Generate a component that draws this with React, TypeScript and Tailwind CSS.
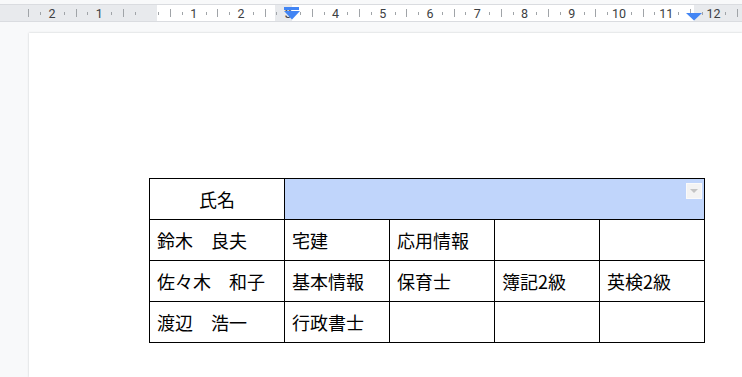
import React from "react";

function Ruler() {
  const origin = 146.5;
  const unit = 47.25;
  const items: React.ReactNode[] = [];
  for (let i = -10; i <= 52; i++) {
    const x = origin + (i * unit) / 4;
    if (x < -2 || x > 745) continue;
    const m = ((i % 4) + 4) % 4;
    if (m === 0) {
      if (i === 0) continue;
      items.push(
        <text
          key={"n" + i}
          x={x}
          y={17.5}
          textAnchor="middle"
          fontSize={12.5}
          fontFamily="Roboto, 'Liberation Sans', sans-serif"
          fill="#3c4043"
        >
          {Math.abs(i / 4)}
        </text>
      );
    } else if (m === 2) {
      items.push(<rect key={"t" + i} x={Math.round(x)} y={9} width={1} height={8} fill="#a0a4a8" />);
    } else {
      items.push(<rect key={"s" + i} x={Math.round(x)} y={12} width={1} height={3} fill="#a0a4a8" />);
    }
  }
  return (
    <svg width={742} height={22} className="block shrink-0">
      <rect x={0} y={0} width={742} height={22} fill="#f8f9fa" />
      <rect x={0} y={5} width={742} height={16} fill="#ffffff" />
      <rect x={0} y={5} width={157} height={16} fill="#e8eaed" />
      <rect x={275} y={5} width={17} height={16} fill="#e8eaed" />
      <rect x={694} y={5} width={48} height={16} fill="#e8eaed" />
      <rect x={0} y={4} width={742} height={1} fill="#dadce0" />
      <rect x={0} y={21} width={742} height={1} fill="#dadce0" />
      {items}
      <rect x={284} y={7} width={15} height={3} fill="#4285f4" />
      <polygon points="284,11 300,11 292,19.5" fill="#4285f4" />
      <polygon points="686,13 702,13 694,20.5" fill="#4285f4" />
    </svg>
  );
}

const cell = "border-l border-t border-black flex items-center pl-[7px] whitespace-pre";

export default function App() {
  const rows = [
    ["鈴木　良夫", "宅建", "応用情報", "", ""],
    ["佐々木　和子", "基本情報", "保育士", "簿記2級", "英検2級"],
    ["渡辺　浩一", "行政書士", "", "", ""],
  ];
  return (
    <div className="w-[742px] h-[377px] overflow-hidden bg-[#f8f9fa] flex flex-col">
      <Ruler />
      <div className="flex-1 flex pl-[29px] pt-[11px]">
        <div className="flex-1 bg-white shadow-[0_0_2px_rgba(60,64,67,0.25)]">
          <div className="ml-[120px] mt-[145px] w-[556px] grid grid-cols-[135px_105px_105px_105px_105px] auto-rows-[41px] border-r border-b border-black text-[18px] leading-none text-black font-['Noto_Sans_CJK_JP',sans-serif]">
            <div className="border-l border-t border-black flex items-center justify-center">氏名</div>
            <div className="col-span-4 border-l border-t border-black bg-[#c0d5fb] flex justify-end items-start pt-[4px] pr-[2px]">
              <div className="w-4 h-4 bg-[#f3f3f3] border border-[#fafafa] flex items-center justify-center">
                <div className="w-0 h-0 border-l-[4px] border-r-[4px] border-t-[4px] border-l-transparent border-r-transparent border-t-[#c4c4c4] -mt-[1px]" />
              </div>
            </div>
            {rows.map((r, ri) =>
              r.map((c, ci) => (
                <div key={ri + "-" + ci} className={cell}>
                  {c}
                </div>
              ))
            )}
          </div>
        </div>
      </div>
    </div>
  );
}
